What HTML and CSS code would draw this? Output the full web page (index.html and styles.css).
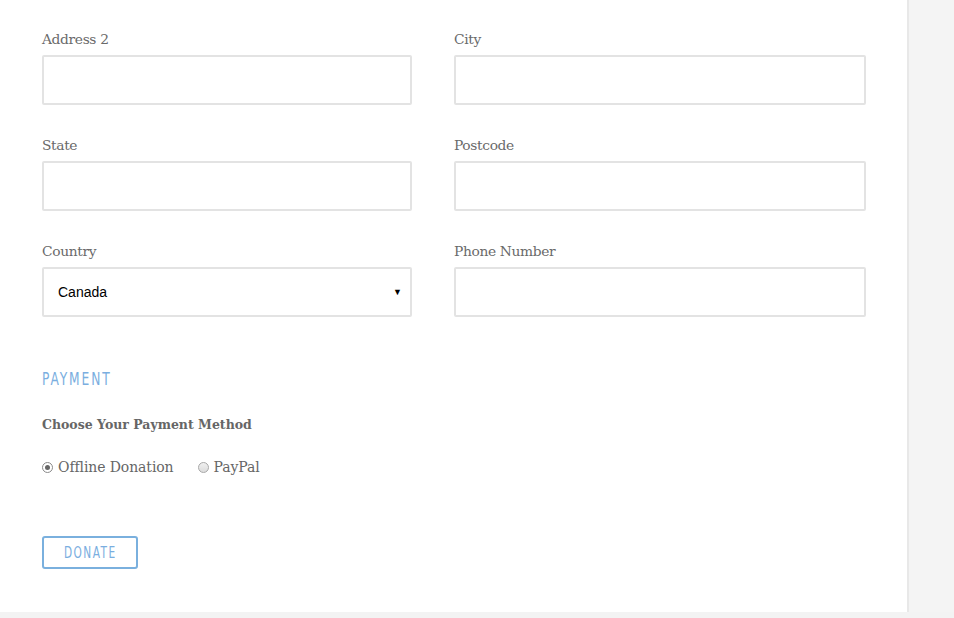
FILE: index.html
```html
<!DOCTYPE html>
<html>
<head>
<meta charset="utf-8">
<link rel="stylesheet" href="styles.css">
</head>
<body>
<div class="page">
  <main class="panel">
    <div class="grid">
      <div class="field left">
        <label class="label">Address 2</label>
        <div class="input"></div>
      </div>
      <div class="field right">
        <label class="label">City</label>
        <div class="input"></div>
      </div>
      <div class="field left">
        <label class="label">State</label>
        <div class="input"></div>
      </div>
      <div class="field right">
        <label class="label">Postcode</label>
        <div class="input"></div>
      </div>
      <div class="field left">
        <label class="label">Country</label>
        <div class="input select"><span class="select-text">Canada</span><span class="arrow">▼</span></div>
      </div>
      <div class="field right">
        <label class="label">Phone Number</label>
        <div class="input"></div>
      </div>
    </div>
    <h2 class="section"><span class="cond">PAYMENT</span></h2>
    <div class="choose">Choose Your Payment Method</div>
    <div class="radios">
      <span class="radio-item"><span class="radio checked"></span>Offline Donation</span>
      <span class="radio-item"><span class="radio"></span>PayPal</span>
    </div>
    <button class="donate"><span class="cond narrow">DONATE</span></button>
  </main>
  <aside class="side"></aside>
</div>
</body>
</html>
```
FILE: styles.css
```css
html, body { margin: 0; padding: 0; }
body { background: #f3f3f3; width: 954px; height: 618px; overflow: hidden; }
.page { display: flex; height: 612px; }
.panel { width: 909px; background: #fff; border-right: 2px solid #e8e8e8; box-sizing: border-box; padding: 30px 0 0 42px; }
.side { flex: 1; background: #f4f4f4; }
.grid { display: grid; grid-template-columns: 370px 412px; column-gap: 42px; row-gap: 31px; }
.label { display: block; font-family: "DejaVu Serif", serif; font-size: 13.8px; color: #6a6a6a; height: 18px; line-height: 18px; margin-bottom: 7px; letter-spacing: -0.35px; }
.input { height: 50px; border: 2px solid #e3e3e3; box-sizing: border-box; border-radius: 2px; background: #fff; }
.select { display: flex; align-items: center; justify-content: space-between; padding: 0 8px 0 14px; font-family: "Liberation Sans", Arial, sans-serif; font-size: 14px; color: #000; }
.arrow { font-size: 9px; }
.cond { display: inline-block; transform: scaleX(0.72); transform-origin: left center; white-space: nowrap; }
.cond.narrow { transform: scaleX(0.66); }
.section { margin: 51px 0 0; font-family: "DejaVu Sans", sans-serif; font-weight: normal; font-size: 17px; letter-spacing: 2.6px; color: #7aaee0; line-height: 22px; }
.choose { margin-top: 26px; font-family: "DejaVu Serif", serif; font-size: 12.5px; font-weight: bold; color: #666; line-height: 18px; }
.radios { margin-top: 24px; display: flex; gap: 24px; font-family: "DejaVu Serif", serif; font-size: 14px; color: #666; line-height: 18px; letter-spacing: -0.1px; }
.radio-item { display: flex; align-items: center; }
.radio { width: 11px; height: 11px; border-radius: 50%; border: 1px solid #a8a8a8; box-sizing: border-box; background: linear-gradient(#f0f0f0, #dcdcdc); margin-right: 5px; position: relative; }
.radio.checked { background: #fff; border-color: #8a8a8a; }
.radio.checked::after { content: ""; position: absolute; left: 2px; top: 2px; width: 5px; height: 5px; border-radius: 50%; background: #666; }
.donate { margin-top: 60px; display: block; width: 96px; height: 33px; border: 2px solid #7ab0de; border-radius: 3px; background: #fff; font-family: "DejaVu Sans", sans-serif; font-size: 16px; letter-spacing: 2.2px; color: #7aaee0; padding: 0 0 0 20px; text-align: left; line-height: 29px; }
```
